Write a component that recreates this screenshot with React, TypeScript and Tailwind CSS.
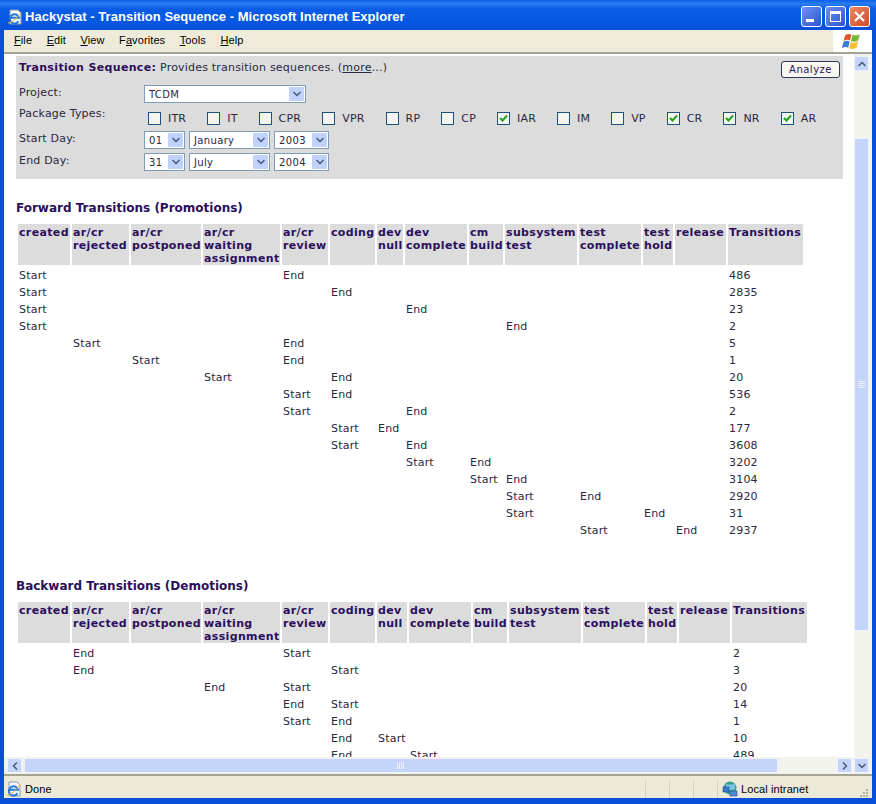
import { ChevronDown, ChevronLeft, ChevronRight, ChevronUp } from 'lucide-react';

const forwardCols = ['w-[52px]', 'w-[57px]', 'w-[70px]', 'w-[77px]', 'w-[46px]', 'w-[45px]', 'w-[26px]', 'w-[62px]', 'w-[34px]', 'w-[72px]', 'w-[62px]', 'w-[30px]', 'w-[51px]', 'w-[75px]'];
const backwardCols = ['w-[52px]', 'w-[57px]', 'w-[70px]', 'w-[77px]', 'w-[46px]', 'w-[45px]', 'w-[30px]', 'w-[62px]', 'w-[34px]', 'w-[72px]', 'w-[62px]', 'w-[30px]', 'w-[51px]', 'w-[75px]'];

const headers = [
  ['created'],
  ['ar/cr', 'rejected'],
  ['ar/cr', 'postponed'],
  ['ar/cr', 'waiting', 'assignment'],
  ['ar/cr', 'review'],
  ['coding'],
  ['dev', 'null'],
  ['dev', 'complete'],
  ['cm', 'build'],
  ['subsystem', 'test'],
  ['test', 'complete'],
  ['test', 'hold'],
  ['release'],
  ['Transitions'],
];

// [start column, end column, count]
const forwardRows: [number, number, number][] = [
  [0, 4, 486], [0, 5, 2835], [0, 7, 23], [0, 9, 2], [1, 4, 5], [2, 4, 1], [3, 5, 20], [4, 5, 536],
  [4, 7, 2], [5, 6, 177], [5, 7, 3608], [7, 8, 3202], [8, 9, 3104], [9, 10, 2920], [9, 11, 31], [10, 12, 2937],
];
const backwardRows: [number, number, number][] = [
  [4, 1, 2], [5, 1, 3], [4, 3, 20], [5, 4, 14], [4, 5, 1], [6, 5, 10], [7, 5, 489],
];

const packages = [
  { name: 'ITR', on: false }, { name: 'IT', on: false }, { name: 'CPR', on: false }, { name: 'VPR', on: false },
  { name: 'RP', on: false }, { name: 'CP', on: false }, { name: 'IAR', on: true }, { name: 'IM', on: false },
  { name: 'VP', on: false }, { name: 'CR', on: true }, { name: 'NR', on: true }, { name: 'AR', on: true },
];

function IeIcon({ className }: { className: string }) {
  return (
    <svg className={className} viewBox="0 0 16 16" fill="none">
      <path d="M3 1h8l3 3v11H3z" fill="#f6f8fc" stroke="#8b98b0" />
      <path d="M11.500 12.200A4.600 4.600 0 1 1 12 8.800H4" stroke="#2378d8" strokeWidth="2" />
      <path d="M1 14C4 14 11 9 14 3" stroke="#e3b64a" strokeWidth="1" />
    </svg>
  );
}

function WinFlag() {
  return (
    <svg className="w-[22px] h-[19px]" viewBox="0 0 21 18">
      <path d="M3 3q3-2 6-.5L7.500 8q-3-1.500-6 .5z" fill="#e2542c" />
      <path d="M10 2.500q3 1.500 7-.5l-1.500 6q-4 2-7 .5z" fill="#7bb63c" />
      <path d="M1.300 9.500q3-2 6-.5L6 15q-3-1.500-6 .5z" fill="#3a7bd5" />
      <path d="M8.300 9.500q3 1.500 7-.5L14 15q-4 2-7 .5z" fill="#f2bf2f" />
    </svg>
  );
}

function NetIcon() {
  return (
    <svg className="w-4 h-4" viewBox="0 0 16 16">
      <circle cx="8" cy="7" r="6.500" fill="#3a9a8a" />
      <path d="M4 3q4 1 9 0v5q-4 2-9 0z" fill="#7cc4ea" />
      <rect x="1" y="6" width="6" height="5" fill="#3c78c8" stroke="#1d4d96" strokeWidth="0.6" />
      <rect x="8" y="10" width="7" height="5" fill="#4f8ad8" stroke="#1d4d96" strokeWidth="0.6" />
    </svg>
  );
}

function Dropdown({ value, width }: { value: string; width: string }) {
  return (
    <div className={`${width} h-[18px] flex items-center justify-between bg-white border border-[#7f9db9] pl-[4px] pr-px text-[10px] tracking-[0.35px]`}>
      <span>{value}</span>
      <span className="w-[15px] h-[14px] flex items-center justify-center bg-[#c1d3fb] rounded-[1px]">
        <ChevronDown className="w-3 h-3 text-[#4d6185]" strokeWidth={3.5} />
      </span>
    </div>
  );
}

function ScrollButton({ children }: { children: React.ReactNode }) {
  return (
    <div className="w-[15px] h-[15px] shrink-0 flex items-center justify-center bg-[#c5d5fa] border border-[#eef2fd] rounded-[2px] text-[#4d6185]">
      {children}
    </div>
  );
}

function TransitionTable({ cols, rows, width }: { cols: string[]; rows: [number, number, number][]; width: string }) {
  return (
    <table className={`table-fixed border-separate border-spacing-[2px] ${width}`}>
      <thead>
        <tr>
          {headers.map((lines, i) => (
            <th key={i} className={`${cols[i]} h-[41px] bg-[#dcdcdc] px-px pt-[2px] pb-0 align-top text-left font-bold text-[#2a0f5c] leading-[13px] tracking-[0.35px]`}>
              {lines.map((line) => (
                <div key={line}>{line}</div>
              ))}
            </th>
          ))}
        </tr>
      </thead>
      <tbody>
        {rows.map(([start, end, count], r) => (
          <tr key={r}>
            {headers.map((_, c) => (
              <td key={c} className="h-[15px] px-px pt-[2px] pb-0 leading-[13px]">
                {c === 13 ? count : c === start ? 'Start' : c === end ? 'End' : ''}
              </td>
            ))}
          </tr>
        ))}
      </tbody>
    </table>
  );
}

export default function App() {
  return (
    <div className="w-[876px] h-[804px] flex flex-col overflow-hidden bg-[#0a4fd8] font-['DejaVu_Sans',sans-serif] text-[11px] tracking-[0.2px] text-[#2b2740]">
      {/* Title bar */}
      <div className="h-[30px] shrink-0 flex items-center justify-between pt-[3px] pl-[7px] pr-[6px] bg-[linear-gradient(180deg,#0b5fe8_0%,#2a7cf0_12%,#0a5ce6_30%,#0558e2_70%,#0a4fd8_100%)]">
        <div className="flex items-center gap-[2px]">
          <IeIcon className="w-4 h-4" />
          <span className="font-['Liberation_Sans',sans-serif] font-bold text-[13px] text-white tracking-[0.03px]">
            Hackystat - Transition Sequence - Microsoft Internet Explorer
          </span>
        </div>
        <div className="flex items-center gap-[3px]">
          <div className="w-[21px] h-[21px] flex items-end p-[4px] rounded-[3px] border border-white bg-[linear-gradient(135deg,#6a93f0,#2a55d0)]">
            <div className="w-[8px] h-[3px] bg-white" />
          </div>
          <div className="w-[21px] h-[21px] p-[4px] rounded-[3px] border border-white bg-[linear-gradient(135deg,#6a93f0,#2a55d0)]">
            <div className="w-full h-full border border-white border-t-[3px]" />
          </div>
          <div className="w-[21px] h-[21px] flex items-center justify-center rounded-[3px] border border-white bg-[linear-gradient(135deg,#ea8a66,#d04a26)]">
            <svg className="w-[13px] h-[13px]" viewBox="0 0 13 13">
              <path d="M2 2l9 9M11 2l-9 9" stroke="#fff" strokeWidth="2.200" />
            </svg>
          </div>
        </div>
      </div>

      {/* Window body */}
      <div className="flex-1 min-h-0 flex flex-col mx-[4px] bg-white">
        {/* Menu bar */}
        <div className="h-[24px] shrink-0 flex border-b-2 border-[#a5a294]">
          <div className="flex-1 flex items-center gap-[14.5px] pl-[10px] pb-[2px] bg-[#efebdb] font-['Liberation_Sans',sans-serif] text-[11px] tracking-[0.1px] text-black">
            <span><u>F</u>ile</span>
            <span><u>E</u>dit</span>
            <span><u>V</u>iew</span>
            <span>F<u>a</u>vorites</span>
            <span><u>T</u>ools</span>
            <span><u>H</u>elp</span>
          </div>
          <div className="w-[39px] flex items-center justify-center bg-white">
            <WinFlag />
          </div>
        </div>

        <div className="flex-1 min-h-0 flex">
          {/* Page */}
          <div className="flex-1 min-w-0 flex flex-col">
            <div className="flex-1 min-h-0 overflow-hidden pt-[2px] pl-[12px]">
              <section className="w-[827px] h-[123px] bg-[#dcdcdc] px-[3px] pt-[4px] leading-[13px]">
                <div className="h-[17px] flex items-start justify-between">
                  <p className="mt-px">
                    <b className="text-[#2a0f5c] tracking-[0.35px]">Transition Sequence:</b> Provides transition sequences. (<u>more</u>...)
                  </p>
                  <button className="w-[59px] h-[17px] mt-px flex items-center justify-center rounded-[3px] border border-[#2b3a55] bg-[#f8f7f1] text-[10px] tracking-[0.5px] text-[#2a0f5c]">
                    Analyze
                  </button>
                </div>
                <div className="grid grid-cols-[125px_1fr] mt-[8px]">
                  <span className="pt-px">Project:</span>
                  <Dropdown value="TCDM" width="w-[162px]" />
                  <span className="pt-[4px]">Package Types:</span>
                  <div className="h-[28px] flex items-center gap-[21px] pl-[4px] pt-[2px]">
                    {packages.map((pkg) => (
                      <div key={pkg.name} className="flex items-center gap-[7px]">
                        <span className="w-[13px] h-[13px] flex items-center justify-center border border-[#1c5180] bg-[#f4f4ee]">
                          {pkg.on && (
                            <svg className="w-[9px] h-[9px]" viewBox="0 0 9 9">
                              <path d="M1 4l2.500 2.500L8 1.500" fill="none" stroke="#21a121" strokeWidth="2" />
                            </svg>
                          )}
                        </span>
                        <span>{pkg.name}</span>
                      </div>
                    ))}
                  </div>
                  <span className="pt-px">Start Day:</span>
                  <div className="flex gap-[4px] mb-[4px]">
                    <Dropdown value="01" width="w-[41px]" />
                    <Dropdown value="January" width="w-[81px]" />
                    <Dropdown value="2003" width="w-[55px]" />
                  </div>
                  <span className="pt-px">End Day:</span>
                  <div className="flex gap-[4px]">
                    <Dropdown value="31" width="w-[41px]" />
                    <Dropdown value="July" width="w-[81px]" />
                    <Dropdown value="2004" width="w-[55px]" />
                  </div>
                </div>
              </section>

              <h3 className="mt-[22px] mb-[7px] h-[14px] leading-[14px] text-[12px] tracking-normal font-bold text-[#2a0f5c]">Forward Transitions (Promotions)</h3>
              <TransitionTable cols={forwardCols} rows={forwardRows} width="w-[789px]" />

              <h3 className="mt-[40px] mb-[7px] h-[14px] leading-[14px] text-[12px] tracking-normal font-bold text-[#2a0f5c]">Backward Transitions (Demotions)</h3>
              <TransitionTable cols={backwardCols} rows={backwardRows} width="w-[793px]" />
            </div>

            {/* Horizontal scrollbar */}
            <div className="h-[17px] shrink-0 flex items-center gap-[2px] pl-[3px] pr-[2px] bg-[#f3f3ee]">
              <ScrollButton><ChevronLeft className="w-3 h-3" strokeWidth={3.5} /></ScrollButton>
              <div className="w-[754px] h-[15px] flex items-center justify-center bg-[#c5d5fa] border border-[#eef2fd] rounded-[2px]">
                <div className="w-[8px] h-[7px] bg-[linear-gradient(90deg,#eef2fd_50%,transparent_50%)] bg-[length:2px_2px]" />
              </div>
              <div className="flex-1" />
              <ScrollButton><ChevronRight className="w-3 h-3" strokeWidth={3.5} /></ScrollButton>
            </div>
          </div>

          {/* Vertical scrollbar */}
          <div className="w-[15px] shrink-0 flex flex-col pt-[2px] pb-[1px] bg-[#f3f3ee]">
            <ScrollButton><ChevronUp className="w-3 h-3" strokeWidth={3.5} /></ScrollButton>
            <div className="h-[67px] shrink-0" />
            <div className="h-[493px] shrink-0 flex items-center justify-center bg-[#c5d5fa] border border-[#eef2fd] rounded-[2px]">
              <div className="w-[7px] h-[8px] bg-[linear-gradient(180deg,#eef2fd_50%,transparent_50%)] bg-[length:2px_2px]" />
            </div>
            <div className="flex-1" />
            <ScrollButton><ChevronDown className="w-3 h-3" strokeWidth={3.5} /></ScrollButton>
          </div>
          <div className="w-[3px] shrink-0 bg-[#f3f3ee]" />
        </div>

        {/* Status bar */}
        <div className="h-[24px] shrink-0 flex items-center pt-[4px] bg-[#ece9d8] border-t-2 border-[#a5a294] font-['Liberation_Sans',sans-serif] text-[11px] tracking-[0.1px] text-black">
          <div className="w-[641px] flex items-center gap-[3px] pl-[2px]">
            <IeIcon className="w-4 h-4" />
            <span>Done</span>
          </div>
          <div className="w-[24px] h-[18px] border-l border-[#d6d2c0]" />
          <div className="w-[24px] h-[18px] border-l border-[#d6d2c0]" />
          <div className="w-[24px] h-[18px] border-l border-[#d6d2c0]" />
          <div className="flex-1 h-[18px] flex items-center gap-[3px] pl-[4px] border-l border-[#d6d2c0]">
            <NetIcon />
            <span>Local intranet</span>
            <svg className="w-[9px] h-[9px] ml-auto mr-[3px] self-end" viewBox="0 0 9 9" fill="#b5b2a2">
              <path d="M6 0h2v2H6zM3 3h2v2H3zM6 3h2v2H6zM0 6h2v2H0zM3 6h2v2H3zM6 6h2v2H6z" />
            </svg>
          </div>
        </div>
      </div>
      <div className="h-[6px] shrink-0" />
    </div>
  );
}
